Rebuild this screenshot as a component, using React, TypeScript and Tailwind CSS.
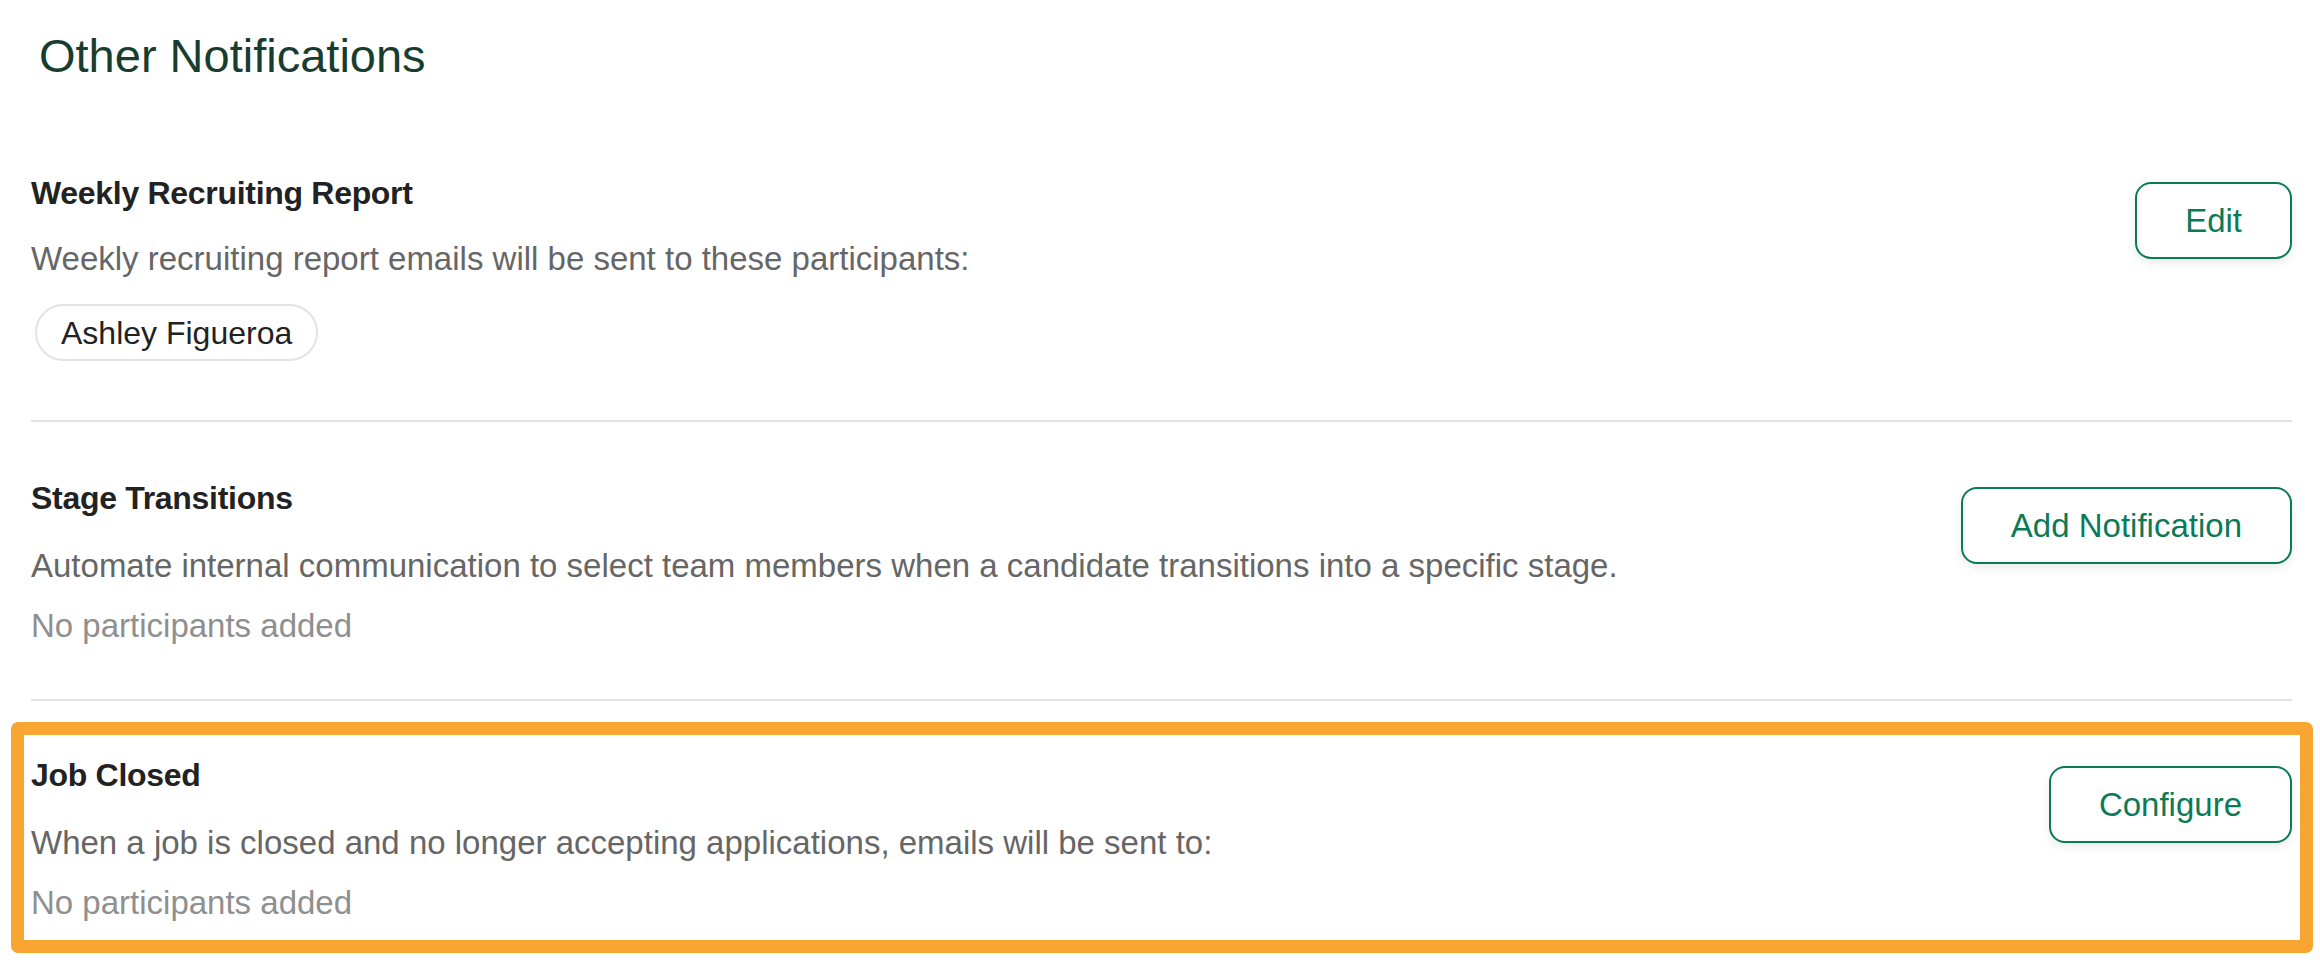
const font = { fontFamily: '"Liberation Sans", Arial, sans-serif' };

function ActionButton({ label }: { label: string }) {
  return (
    <button className="h-[77px] shrink-0 rounded-[16px] border-2 border-[#0b7a56] bg-white px-[48px] text-[33px] leading-none text-[#0b7a56] shadow-[0_4px_10px_rgba(0,0,0,0.08)]">
      {label}
    </button>
  );
}

function Muted({ children }: { children: React.ReactNode }) {
  return <p className="mt-[12px] text-[33px] leading-[48px] text-[#8f8f8f]">{children}</p>;
}

export default function App() {
  return (
    <div className="min-h-screen bg-white pl-[31px] pr-[28px]" style={font}>
      <h1 className="pt-[27px] pl-[8px] text-[47px] leading-[58px] text-[#173d2f]">Other Notifications</h1>

      {/* weekly report */}
      <section className="mt-[88px] flex items-start justify-between pb-[59px]">
        <div>
          <h2 className="text-[32px] font-bold leading-[40px] tracking-[-0.3px] text-[#222]">Weekly Recruiting Report</h2>
          <p className="mt-[22px] text-[33px] leading-[48px] text-[#666]">
            Weekly recruiting report emails will be sent to these participants:
          </p>
          <div className="mt-[21px] ml-[4px] inline-flex h-[57px] items-center rounded-full border-2 border-[#e3e3e3] px-[24px] text-[32px] text-[#222]">
            Ashley Figueroa
          </div>
        </div>
        <div className="mt-[9px]">
          <ActionButton label="Edit" />
        </div>
      </section>
      <div className="h-[2px] bg-[#e3e3e3]" />

      {/* stage transitions */}
      <section className="flex items-start justify-between pt-[56px] pb-[49px]">
        <div>
          <h2 className="text-[32px] font-bold leading-[40px] tracking-[-0.3px] text-[#222]">Stage Transitions</h2>
          <p className="mt-[24px] text-[33px] leading-[48px] text-[#666]">
            Automate internal communication to select team members when a candidate transitions into a specific stage.
          </p>
          <Muted>No participants added</Muted>
        </div>
        <div className="mt-[9px]">
          <ActionButton label="Add Notification" />
        </div>
      </section>
      <div className="h-[2px] bg-[#e3e3e3]" />

      {/* job closed, highlighted */}
      <section className="relative flex items-start justify-between pt-[54px] pb-[26px]">
        <div>
          <h2 className="text-[32px] font-bold leading-[40px] tracking-[-0.3px] text-[#222]">Job Closed</h2>
          <p className="mt-[24px] text-[33px] leading-[48px] text-[#666]">
            When a job is closed and no longer accepting applications, emails will be sent to:
          </p>
          <Muted>No participants added</Muted>
        </div>
        <div className="mt-[11px]">
          <ActionButton label="Configure" />
        </div>
        <div className="pointer-events-none absolute top-[21px] -right-[21px] bottom-0 -left-[20px] rounded-[7px] border-[13px] border-[#f8a532]" />
      </section>
    </div>
  );
}
